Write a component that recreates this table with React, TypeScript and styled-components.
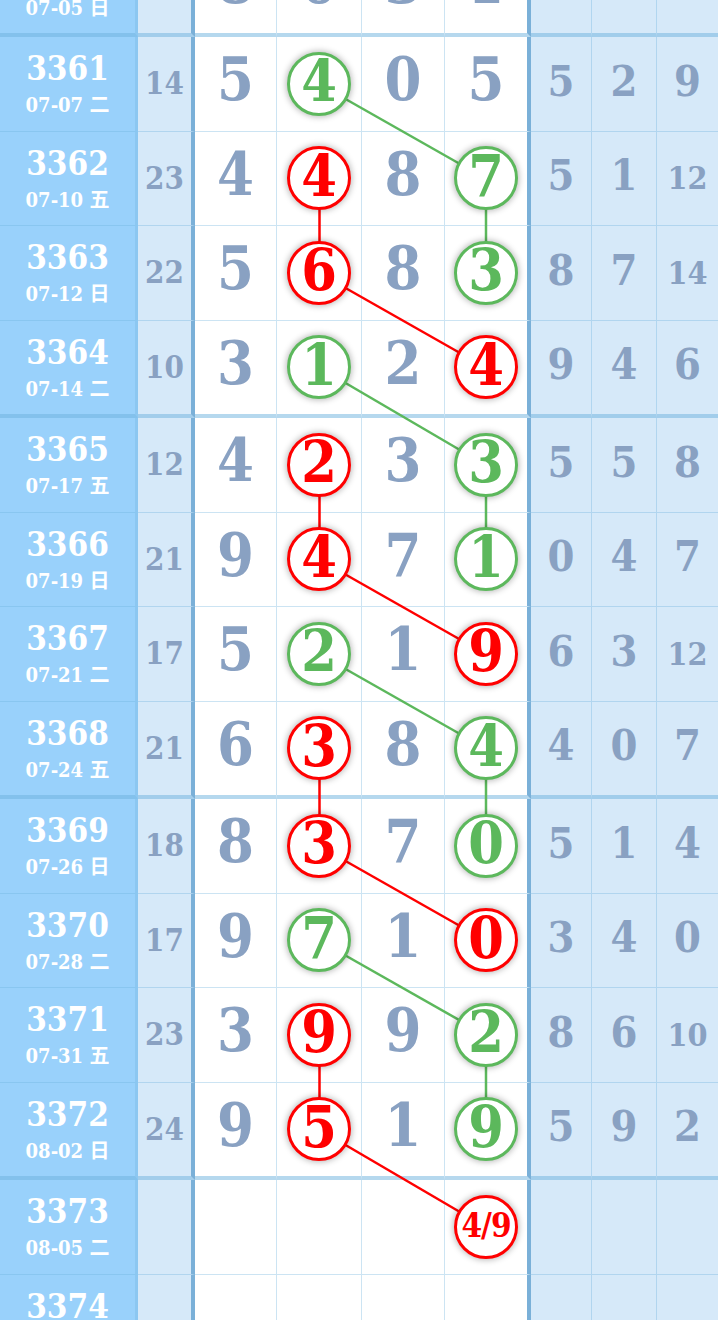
import React from 'react';
import styled, { createGlobalStyle } from 'styled-components';

const GlobalStyle = createGlobalStyle`
  html, body {
    margin: 0;
    padding: 0;
    background: #ffffff;
  }
  body {
    width: 718px;
    height: 1320px;
    overflow: hidden;
    font-family: "DejaVu Serif", "Noto Sans CJK SC", serif;
    font-stretch: condensed;
  }
`;

type Mark = { col: number; color: 'red' | 'green'; label?: string };

type Draw = {
    issue: string;
    date: string;
    sum?: string;
    digits: string[];
    marks: Mark[];
    tail: string[];
};

const R = (col: number, label?: string): Mark => ({ col, color: 'red', label });
const G = (col: number): Mark => ({ col, color: 'green' });

const draws: Draw[] = [
    { issue: '3360', date: '07-05 日', sum: '12', digits: ['8', '0', '3', '1'], marks: [], tail: ['3', '0', '2'] },
    { issue: '3361', date: '07-07 二', sum: '14', digits: ['5', '4', '0', '5'], marks: [G(1)], tail: ['5', '2', '9'] },
    { issue: '3362', date: '07-10 五', sum: '23', digits: ['4', '4', '8', '7'], marks: [R(1), G(3)], tail: ['5', '1', '12'] },
    { issue: '3363', date: '07-12 日', sum: '22', digits: ['5', '6', '8', '3'], marks: [R(1), G(3)], tail: ['8', '7', '14'] },
    { issue: '3364', date: '07-14 二', sum: '10', digits: ['3', '1', '2', '4'], marks: [G(1), R(3)], tail: ['9', '4', '6'] },
    { issue: '3365', date: '07-17 五', sum: '12', digits: ['4', '2', '3', '3'], marks: [R(1), G(3)], tail: ['5', '5', '8'] },
    { issue: '3366', date: '07-19 日', sum: '21', digits: ['9', '4', '7', '1'], marks: [R(1), G(3)], tail: ['0', '4', '7'] },
    { issue: '3367', date: '07-21 二', sum: '17', digits: ['5', '2', '1', '9'], marks: [G(1), R(3)], tail: ['6', '3', '12'] },
    { issue: '3368', date: '07-24 五', sum: '21', digits: ['6', '3', '8', '4'], marks: [R(1), G(3)], tail: ['4', '0', '7'] },
    { issue: '3369', date: '07-26 日', sum: '18', digits: ['8', '3', '7', '0'], marks: [R(1), G(3)], tail: ['5', '1', '4'] },
    { issue: '3370', date: '07-28 二', sum: '17', digits: ['9', '7', '1', '0'], marks: [G(1), R(3)], tail: ['3', '4', '0'] },
    { issue: '3371', date: '07-31 五', sum: '23', digits: ['3', '9', '9', '2'], marks: [R(1), G(3)], tail: ['8', '6', '10'] },
    { issue: '3372', date: '08-02 日', sum: '24', digits: ['9', '5', '1', '9'], marks: [R(1), G(3)], tail: ['5', '9', '2'] },
    { issue: '3373', date: '08-05 二', digits: ['', '', '', ''], marks: [R(3, '4/9')], tail: ['', '', ''] },
    { issue: '3374', date: '08-07 日', digits: ['', '', '', ''], marks: [], tail: ['', '', ''] },
];

const RED = '#ff0000';
const GREEN = '#5cb85c';
const INK = '#89a1c2';
const ROW_BODY = 93.5;
const NUM_WIDTHS = [82, 85, 83, 86];
const NUM_LEFT = 195;
const TAIL_WIDTHS = [61, 65, 61];

const isThick = (i: number) => i % 4 === 0;

const Scroller = styled.div`
    height: 1320px;
    overflow: hidden;
`;

const Table = styled.div`
    position: relative;
    margin-top: -60.5px;
    width: 718px;
`;

const Row = styled.div`
    display: flex;
`;

const Cell = styled.div<{ $thick: boolean; $w: number }>`
    box-sizing: border-box;
    flex: 0 0 ${p => p.$w}px;
    width: ${p => p.$w}px;
    height: ${p => ROW_BODY + (p.$thick ? 4 : 1)}px;
    border-bottom: ${p => (p.$thick ? '4px solid rgba(110, 178, 222, 0.5)' : '1px solid rgba(110, 178, 222, 0.35)')};
    display: flex;
    align-items: center;
    justify-content: center;
`;

const IssueCell = styled(Cell)`
    background: #99d1fb;
    border-right: 3px solid #8cc7f1;
    flex-direction: column;
    gap: 7px;
    color: #ffffff;
`;

const IssueNo = styled.div`
    font-weight: 700;
    font-size: 33px;
    line-height: 36px;
`;

const IssueDate = styled.div`
    font-weight: 700;
    font-size: 20px;
    line-height: 22px;
    white-space: nowrap;
`;

const SumCell = styled(Cell)`
    background: #d6e9f9;
    border-right: 4px solid #7ab0d8;
    color: ${INK};
    font-weight: 700;
    font-size: 31px;
    line-height: 1;
`;

const NumCell = styled(Cell)<{ $edge: 'thin' | 'thick' }>`
    background: #ffffff;
    border-right: ${p => (p.$edge === 'thick' ? '4px solid #7ab0d8' : '1px solid rgba(110, 178, 222, 0.35)')};
`;

const Digit = styled.span`
    color: ${INK};
    font-weight: 700;
    font-size: 59px;
    line-height: 1;
    padding-bottom: 8px;
`;

const Ball = styled.div<{ $color: string; $small: boolean }>`
    position: relative;
    z-index: 2;
    box-sizing: border-box;
    width: 64px;
    height: 64px;
    border-radius: 50%;
    border: 3px solid ${p => p.$color};
    background: #ffffff;
    box-shadow: 0 0 6px 1px rgba(0, 0, 0, 0.28);
    color: ${p => p.$color};
    display: flex;
    align-items: center;
    justify-content: center;
    font-weight: 700;
    font-size: ${p => (p.$small ? 33 : 57)}px;
    line-height: 1;
    padding-bottom: ${p => (p.$small ? 2 : 6)}px;
    white-space: nowrap;
    letter-spacing: ${p => (p.$small ? '-1px' : '0')};
`;

const TailCell = styled(Cell)<{ $last: boolean }>`
    background: #d6e9f9;
    border-right: ${p => (p.$last ? 'none' : '1px solid rgba(110, 178, 222, 0.35)')};
`;

const TailNum = styled.span<{ $wide: boolean }>`
    color: ${INK};
    font-weight: 700;
    font-size: ${p => (p.$wide ? 32 : 43)}px;
    line-height: 1;
    padding-bottom: ${p => (p.$wide ? 0 : 5)}px;
`;

const Links = styled.svg`
    position: absolute;
    left: 0;
    top: 0;
    z-index: 1;
    pointer-events: none;
`;

const colCenter = (col: number) => {
    let x = NUM_LEFT;
    for (let i = 0; i < col; i++) x += NUM_WIDTHS[i];
    const w = col === 3 ? NUM_WIDTHS[3] - 4 : NUM_WIDTHS[col];
    return x + w / 2;
};

const App = () => {
    const centers: number[] = [];
    let y = 0;
    draws.forEach((_, i) => {
        centers.push(y + ROW_BODY / 2);
        y += ROW_BODY + (isThick(i) ? 4 : 1);
    });
    const total = y;

    // only links that go straight down or down-right are drawn
    const segments: { x1: number; y1: number; x2: number; y2: number; color: string }[] = [];
    draws.forEach((d, i) => {
        const next = draws[i + 1];
        if (!next) return;
        d.marks.forEach(m => {
            const n = next.marks.find(k => k.color === m.color);
            if (!n || n.col < m.col) return;
            segments.push({
                x1: colCenter(m.col),
                y1: centers[i],
                x2: colCenter(n.col),
                y2: centers[i + 1],
                color: m.color === 'red' ? RED : GREEN,
            });
        });
    });

    return (
        <Scroller>
            <GlobalStyle />
            <Table>
                <Links width={718} height={total}>
                    {segments.map((s, i) => (
                        <line key={i} x1={s.x1} y1={s.y1} x2={s.x2} y2={s.y2} stroke={s.color} strokeWidth={2.5} />
                    ))}
                </Links>
                {draws.map((d, i) => {
                    const thick = isThick(i);
                    return (
                        <Row key={d.issue}>
                            <IssueCell $thick={thick} $w={138}>
                                <IssueNo>{d.issue}</IssueNo>
                                <IssueDate>{d.date}</IssueDate>
                            </IssueCell>
                            <SumCell $thick={thick} $w={57}>
                                {d.sum}
                            </SumCell>
                            {d.digits.map((v, c) => {
                                const mark = d.marks.find(m => m.col === c);
                                return (
                                    <NumCell key={c} $thick={thick} $w={NUM_WIDTHS[c]} $edge={c === 3 ? 'thick' : 'thin'}>
                                        {mark ? (
                                            <Ball $color={mark.color === 'red' ? RED : GREEN} $small={!!mark.label}>
                                                {mark.label ?? v}
                                            </Ball>
                                        ) : (
                                            v && <Digit>{v}</Digit>
                                        )}
                                    </NumCell>
                                );
                            })}
                            {d.tail.map((v, c) => (
                                <TailCell key={c} $thick={thick} $w={TAIL_WIDTHS[c]} $last={c === 2}>
                                    {v && <TailNum $wide={v.length > 1}>{v}</TailNum>}
                                </TailCell>
                            ))}
                        </Row>
                    );
                })}
            </Table>
        </Scroller>
    );
};

export default App;
